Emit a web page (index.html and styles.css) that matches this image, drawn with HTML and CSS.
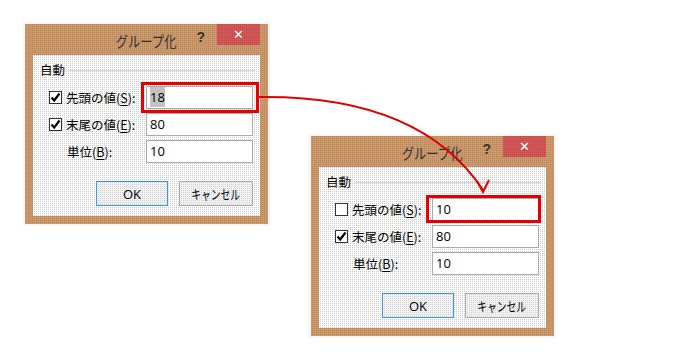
FILE: index.html
```html
<!DOCTYPE html>
<html lang="ja">
<head>
    <meta charset="UTF-8">
    <title>グループ化</title>
    <link rel="stylesheet" href="styles.css">
</head>
<body>

    <div class="desk">

        <!-- 変更前 -->
        <div class="win win-a">
            <div class="titlebar">
                <span></span>
                <span class="title">グループ化</span>
                <div class="caption-btns">
                    <span class="help">?</span>
                    <span class="close">&#x2715;</span>
                </div>
            </div>
            <div class="client">
                <div class="group-head">
                    <span>自動</span>
                    <span class="group-line"></span>
                </div>
                <div class="row">
                    <span class="check on"><svg viewBox="0 0 11 11"><path d="M1.5 5.5 L4.2 8.5 L9.5 1.5" /></svg></span>
                    <span class="label">先頭の値(<u>S</u>):</span>
                    <div class="field mark mark-a"><span class="sel">18</span></div>
                </div>
                <div class="row">
                    <span class="check on"><svg viewBox="0 0 11 11"><path d="M1.5 5.5 L4.2 8.5 L9.5 1.5" /></svg></span>
                    <span class="label">末尾の値(<u>E</u>):</span>
                    <div class="field">80</div>
                </div>
                <div class="row">
                    <span class="label plain">単位(<u>B</u>):</span>
                    <div class="field">10</div>
                </div>
                <div class="buttons">
                    <span class="btn btn-ok">OK</span>
                    <span class="btn btn-cancel"><span class="narrow">キャンセル</span></span>
                </div>
            </div>
        </div>

        <!-- 変更後 -->
        <div class="win win-b">
            <div class="titlebar">
                <span></span>
                <span class="title">グループ化</span>
                <div class="caption-btns">
                    <span class="help">?</span>
                    <span class="close">&#x2715;</span>
                </div>
            </div>
            <div class="client">
                <div class="group-head">
                    <span>自動</span>
                    <span class="group-line"></span>
                </div>
                <div class="row">
                    <span class="check"></span>
                    <span class="label">先頭の値(<u>S</u>):</span>
                    <div class="field mark mark-b">10</div>
                </div>
                <div class="row">
                    <span class="check on"><svg viewBox="0 0 11 11"><path d="M1.5 5.5 L4.2 8.5 L9.5 1.5" /></svg></span>
                    <span class="label">末尾の値(<u>E</u>):</span>
                    <div class="field">80</div>
                </div>
                <div class="row">
                    <span class="label plain">単位(<u>B</u>):</span>
                    <div class="field">10</div>
                </div>
                <div class="buttons">
                    <span class="btn btn-ok">OK</span>
                    <span class="btn btn-cancel"><span class="narrow">キャンセル</span></span>
                </div>
            </div>
        </div>

        <svg class="arrow" width="698" height="361" viewBox="0 0 698 361">
            <path d="M259 97 Q 420 95 483 190" />
            <path d="M477 181 L483 192 L489 180" />
        </svg>

    </div>

</body>
</html>
```

FILE: styles.css
```css
body {
    margin: 0;
    background-color: #fff;
    font-family: "Noto Sans CJK JP", "Noto Sans", sans-serif;
    font-size: 12.5px;
    color: #000;
}

.desk {
    position: relative;
    width: 698px;
    height: 361px;
}

/* ウィンドウ */
.win {
    position: absolute;
    width: 243px;
    height: 200px;
    box-sizing: border-box;
    padding: 0 8px 8px;
    display: flex;
    flex-direction: column;
    background-color: #cb9a66;
    background-image: conic-gradient(#b5826a 0 25%, transparent 0 100%);
    background-size: 2px 2px;
    box-shadow: 0 0 0 2px rgba(0, 0, 0, 0.04);
}

.win-a {
    left: 25px;
    top: 24px;
}

.win-b {
    left: 311px;
    top: 136px;
}

.titlebar {
    height: 31px;
    display: grid;
    grid-template-columns: 1fr auto 1fr;
    align-items: start;
}

.title {
    font-size: 15px;
    line-height: 18px;
    margin-top: 8px;
    color: #333;
    transform: scaleX(0.82);
}

.caption-btns {
    display: flex;
    justify-content: flex-end;
    align-items: flex-start;
}

.help {
    font-family: "Liberation Sans", sans-serif;
    font-weight: bold;
    font-size: 14px;
    line-height: 16px;
    margin-top: 5px;
    margin-right: 12px;
    color: #333;
}

.close {
    width: 43px;
    height: 21px;
    display: flex;
    align-items: center;
    justify-content: center;
    color: #fff;
    font-family: "DejaVu Sans", sans-serif;
    font-size: 13px;
    font-weight: bold;
    background-color: #d45656;
    background-image: conic-gradient(#bb4a4a 0 25%, transparent 0 100%);
    background-size: 2px 2px;
}

/* クライアント領域 */
.client {
    flex: 1;
    display: flex;
    flex-direction: column;
    background-color: #fff;
    background-image: conic-gradient(#cacaca 0 25%, transparent 0 100%);
    background-size: 2px 2px;
}

.group-head {
    display: flex;
    align-items: center;
    padding: 7px 5px 0 7px;
    height: 16px;
    line-height: 16px;
}

.group-line {
    flex: 1;
    margin-left: 4px;
    border-top: 1px solid #d6d6d6;
}

.row {
    display: flex;
    align-items: center;
    height: 23px;
    margin-top: 4px;
}

.group-head + .row {
    margin-top: 8px;
}

.check {
    width: 11px;
    height: 11px;
    margin-left: 16px;
    border: 1px solid #333;
    background-color: #fff;
    display: flex;
}

.check svg {
    width: 11px;
    height: 11px;
}

.check path {
    fill: none;
    stroke: #000;
    stroke-width: 2.2;
}

.label {
    margin-left: 4px;
}

.label.plain {
    margin-left: 34px;
}

.label u {
    text-underline-offset: 2px;
}

.field {
    position: relative;
    width: 107px;
    height: 23px;
    box-sizing: border-box;
    margin-left: auto;
    margin-right: 7px;
    border: 1px solid #ababab;
    background-color: #fff;
    padding-left: 3px;
    font-family: "Open Sans", sans-serif;
    font-size: 13px;
    line-height: 21px;
}

.sel {
    background-color: #c3c3c3;
    padding: 1px 0;
}

.mark::after {
    content: "";
    position: absolute;
    border: 3px solid #e60000;
}

.mark-a::after {
    left: -6px;
    right: -7px;
    top: -5px;
    bottom: -5px;
}

.mark-b::after {
    left: -7px;
    right: -3px;
    top: -4px;
    bottom: -3px;
}

.buttons {
    display: flex;
    justify-content: flex-end;
    gap: 11px;
    margin-top: 18px;
    margin-right: 7px;
}

.btn {
    height: 25px;
    box-sizing: border-box;
    display: flex;
    align-items: center;
    justify-content: center;
    background-color: #f2f2f2;
    background-image: conic-gradient(#d2d2d2 0 25%, transparent 0 100%);
    background-size: 2px 2px;
}

.btn-ok {
    width: 72px;
    border: 1px solid #3d9be6;
    font-family: "Open Sans", sans-serif;
    font-size: 13px;
}

.btn-cancel {
    width: 74px;
    border: 1px solid #acacac;
    font-size: 13px;
}

.narrow {
    display: inline-block;
    transform: scaleX(0.75);
    white-space: nowrap;
}

/* 矢印 */
.arrow {
    position: absolute;
    left: 0;
    top: 0;
    pointer-events: none;
}

.arrow path {
    fill: none;
    stroke: #e30000;
    stroke-width: 2;
}
```
